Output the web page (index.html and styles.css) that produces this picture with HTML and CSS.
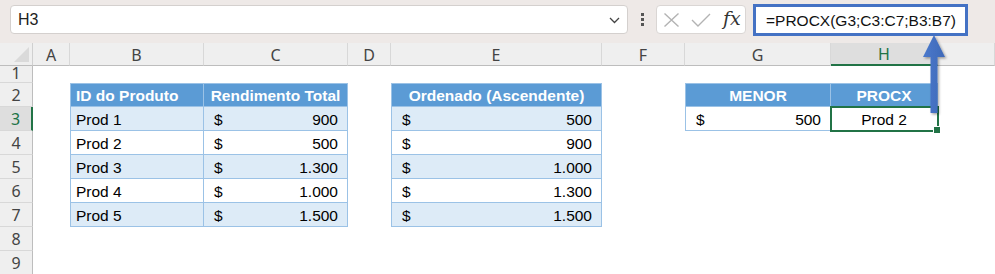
FILE: index.html
```html
<!DOCTYPE html>
<html lang="pt">
<head>
<meta charset="utf-8">
<title>PROCX</title>
<link rel="stylesheet" href="styles.css">
</head>
<body>
<div class="app">
  <div class="fbar">
    <div class="namebox">
      <span class="ref">H3</span>
      <svg class="chev" width="11" height="7" viewBox="0 0 11 7"><polyline points="1,1 5.5,5.5 10,1" fill="none" stroke="#444" stroke-width="1.3"/></svg>
    </div>
    <div class="dots"><i></i><i></i><i></i></div>
    <div class="fxbox">
      <svg width="17" height="14" viewBox="0 0 17 14"><path d="M1.5 0.5 L15.5 13.5 M15.5 0.5 L1.5 13.5" stroke="#b3b3b3" stroke-width="1.4" fill="none"/></svg>
      <svg width="20" height="14" viewBox="0 0 20 14"><polyline points="1,7 7,13 19,1" stroke="#b3b3b3" stroke-width="1.4" fill="none"/></svg>
      <span class="fx">fx</span>
    </div>
    <div class="formula">=PROCX(G3;C3:C7;B3:B7)</div>
  </div>

  <div class="sheet">
    <div class="corner"></div>
    <div class="ch">A</div><div class="ch">B</div><div class="ch">C</div><div class="ch">D</div><div class="ch">E</div><div class="ch">F</div><div class="ch">G</div><div class="ch ch-sel">H</div><div class="ch"></div>

    <div class="rh rh1">1</div>
    <div></div><div></div><div></div><div></div><div></div><div></div><div></div><div></div><div></div>

    <div class="rh">2</div>
    <div></div>
    <div class="th bl left">ID do Produto</div>
    <div class="th">Rendimento Total</div>
    <div></div>
    <div class="th bl">Ordenado (Ascendente)</div>
    <div></div>
    <div class="th bl">MENOR</div>
    <div class="th">PROCX</div>
    <div></div>

    <div class="rh rh-sel">3</div>
    <div></div>
    <div class="td band bl">Prod 1</div>
    <div class="td band acc"><span>$</span><span>900</span></div>
    <div></div>
    <div class="td band bl acc"><span>$</span><span>500</span></div>
    <div></div>
    <div class="td bl acc"><span>$</span><span>500</span></div>
    <div class="td sel">Prod 2</div>
    <div></div>

    <div class="rh">4</div>
    <div></div>
    <div class="td bl">Prod 2</div>
    <div class="td acc"><span>$</span><span>500</span></div>
    <div></div>
    <div class="td bl acc"><span>$</span><span>900</span></div>
    <div></div><div></div><div></div><div></div>

    <div class="rh">5</div>
    <div></div>
    <div class="td band bl">Prod 3</div>
    <div class="td band acc"><span>$</span><span>1.300</span></div>
    <div></div>
    <div class="td band bl acc"><span>$</span><span>1.000</span></div>
    <div></div><div></div><div></div><div></div>

    <div class="rh">6</div>
    <div></div>
    <div class="td bl">Prod 4</div>
    <div class="td acc"><span>$</span><span>1.000</span></div>
    <div></div>
    <div class="td bl acc"><span>$</span><span>1.300</span></div>
    <div></div><div></div><div></div><div></div>

    <div class="rh">7</div>
    <div></div>
    <div class="td band bl">Prod 5</div>
    <div class="td band acc"><span>$</span><span>1.500</span></div>
    <div></div>
    <div class="td band bl acc"><span>$</span><span>1.500</span></div>
    <div></div><div></div><div></div><div></div>

    <div class="rh">8</div>
    <div></div><div></div><div></div><div></div><div></div><div></div><div></div><div></div><div></div>

    <div class="rh">9</div>
    <div></div><div></div><div></div><div></div><div></div><div></div><div></div><div></div><div></div>
  </div>

  <svg class="arrow" width="40" height="90" viewBox="0 0 40 90">
    <defs>
      <filter id="sh" x="-50%" y="-20%" width="200%" height="140%">
        <feDropShadow dx="1.5" dy="1.5" stdDeviation="1.2" flood-color="#000" flood-opacity="0.35"/>
      </filter>
      <linearGradient id="ag" x1="0" x2="1" y1="0" y2="0">
        <stop offset="0" stop-color="#4a79cc"/>
        <stop offset="1" stop-color="#3f69b8"/>
      </linearGradient>
    </defs>
    <path d="M19 7 L30 29 L22.5 29 L22.5 85 L15.5 85 L15.5 29 L8 29 Z" fill="url(#ag)" filter="url(#sh)"/>
  </svg>
</div>
</body>
</html>
```

FILE: styles.css
```css
* { box-sizing: border-box; }
html, body { margin: 0; padding: 0; background: #ffffff; }
body { width: 995px; height: 274px; overflow: hidden; }

.app {
  position: relative;
  width: 995px;
  height: 274px;
  font-family: "Liberation Sans", Arial, sans-serif;
}

/* formula bar */
.fbar {
  height: 43px;
  background: #eee9e7;
  display: flex;
  align-items: flex-start;
  padding: 5px 0 0 10px;
}
.namebox {
  width: 618px;
  height: 29px;
  background: #fff;
  border: 1px solid #d4d0ce;
  border-radius: 4px;
  display: flex;
  align-items: center;
  justify-content: space-between;
  padding: 0 7px 0 7px;
}
.ref { font-size: 16px; color: #222; padding-top: 1px; }
.chev { margin-top: 2px; }
.dots {
  width: 28px;
  height: 29px;
  display: flex;
  flex-direction: column;
  align-items: center;
  justify-content: center;
  gap: 2px;
}
.dots i { display: block; width: 3px; height: 3px; background: #555; }
.fxbox {
  width: 90px;
  height: 29px;
  background: #fff;
  border: 1px solid #dad6d4;
  border-radius: 4px;
  display: flex;
  align-items: center;
  padding: 0 0 0 6px;
  gap: 11px;
}
.fx {
  font-family: "DejaVu Serif", "Liberation Serif", serif;
  font-style: italic;
  font-size: 19px;
  color: #333;
  margin-left: 1px;
  line-height: 1;
  padding-bottom: 2px;
}
.formula {
  margin: -1px 0 0 7px;
  width: 215px;
  height: 32px;
  background: #fff;
  border: 3px solid #4472c4;
  font-size: 15.5px;
  color: #111;
  display: flex;
  align-items: center;
  padding: 1px 0 0 10px;
}

/* sheet grid */
.sheet {
  display: grid;
  grid-template-columns: 33px 37px 134px 144px 43px 211px 83px 146px 107px 1fr;
  grid-template-rows: 23px 17px repeat(8, 24px);
  font-size: 15.5px;
  color: #000;
}
.corner {
  background: #efefef;
  border-right: 1px solid #d0d0d0;
  border-bottom: 1px solid #bdbdbd;
  position: relative;
}
.corner::after {
  content: "";
  position: absolute;
  right: 3px;
  bottom: 3px;
  width: 0;
  height: 0;
  border-left: 15px solid transparent;
  border-bottom: 15px solid #dadada;
}
.ch {
  background: #efefef;
  border-right: 1px solid #d8d8d8;
  border-bottom: 1px solid #bdbdbd;
  font-family: "Noto Sans", "Open Sans", sans-serif;
  font-size: 16px;
  color: #444;
  display: flex;
  align-items: center;
  justify-content: center;
  padding-top: 1px;
}
.ch-sel {
  background: #dedede;
  color: #217346;
  border-bottom: 2px solid #217346;
}
.rh {
  background: #efefef;
  border-right: 1px solid #bdbdbd;
  border-bottom: 1px solid #d8d8d8;
  font-family: "Noto Sans", "Open Sans", sans-serif;
  font-size: 16px;
  color: #444;
  display: flex;
  align-items: center;
  justify-content: center;
  padding-top: 1px;
}
.rh1 { align-items: flex-start; padding-top: 0; line-height: 15px; }
.rh-sel {
  background: #dedede;
  color: #217346;
  border-right: 2px solid #217346;
}

.th {
  background: #5b9bd5;
  color: #fff;
  font-weight: bold;
  border-top: 1px solid #9bc2e6;
  border-right: 1px solid #9bc2e6;
  border-bottom: 1px solid #9bc2e6;
  display: flex;
  align-items: center;
  justify-content: center;
  padding-top: 2px;
  white-space: nowrap;
}
.th.left { justify-content: flex-start; padding-left: 5px; }
.bl { border-left: 1px solid #9bc2e6; }

.td {
  background: #fff;
  border-right: 1px solid #9bc2e6;
  border-bottom: 1px solid #9bc2e6;
  display: flex;
  align-items: center;
  padding: 2px 5px 0 5px;
  white-space: nowrap;
}
.td.band { background: #ddebf7; }
.td.acc { justify-content: space-between; padding-left: 10px; padding-right: 9px; }
.td.sel {
  justify-content: center;
  position: relative;
  outline: 2px solid #217346;
  outline-offset: -1px;
  z-index: 1;
}
.td.sel::after {
  content: "";
  position: absolute;
  right: -4px;
  bottom: -4px;
  width: 6px;
  height: 6px;
  background: #217346;
  border: 1px solid #fff;
}

.arrow {
  position: absolute;
  left: 915px;
  top: 28px;
  z-index: 2;
}
```
